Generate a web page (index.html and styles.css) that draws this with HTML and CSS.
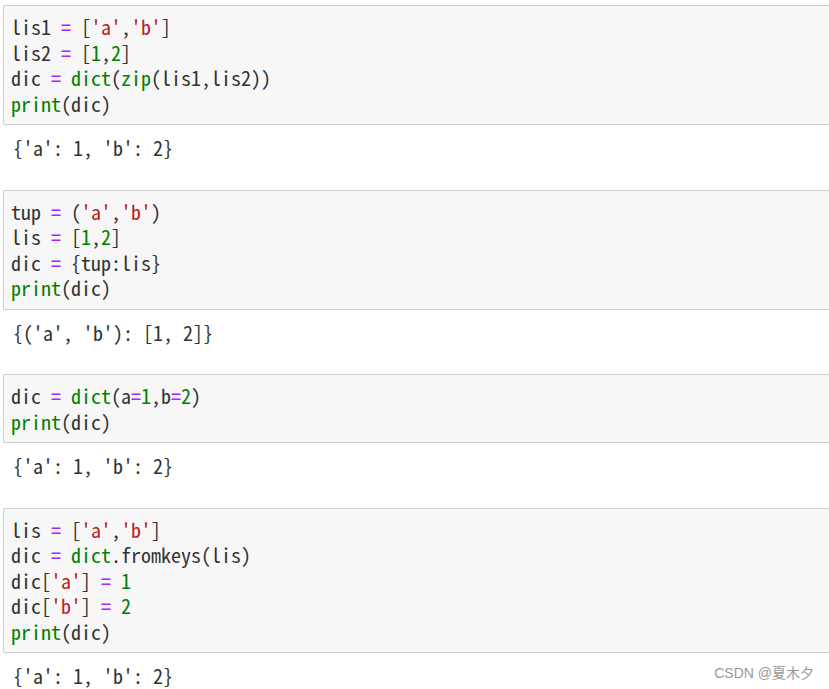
FILE: index.html
```html
<!DOCTYPE html>
<html>
<head>
<meta charset="utf-8">
<link rel="stylesheet" href="styles.css">
</head>
<body>
<div class="nb">
  <div class="cell">
    <pre class="input">lis1 <span class="o">=</span> [<span class="s">'a'</span>,<span class="s">'b'</span>]
lis2 <span class="o">=</span> [<span class="n">1</span>,<span class="n">2</span>]
dic <span class="o">=</span> <span class="k">dict</span>(<span class="k">zip</span>(lis1,lis2))
<span class="k">print</span>(dic)</pre>
    <pre class="output">{'a': 1, 'b': 2}</pre>
  </div>
  <div class="cell">
    <pre class="input">tup <span class="o">=</span> (<span class="s">'a'</span>,<span class="s">'b'</span>)
lis <span class="o">=</span> [<span class="n">1</span>,<span class="n">2</span>]
dic <span class="o">=</span> {tup:lis}
<span class="k">print</span>(dic)</pre>
    <pre class="output">{('a', 'b'): [1, 2]}</pre>
  </div>
  <div class="cell">
    <pre class="input">dic <span class="o">=</span> <span class="k">dict</span>(a<span class="o">=</span><span class="n">1</span>,b<span class="o">=</span><span class="n">2</span>)
<span class="k">print</span>(dic)</pre>
    <pre class="output">{'a': 1, 'b': 2}</pre>
  </div>
  <div class="cell">
    <pre class="input">lis <span class="o">=</span> [<span class="s">'a'</span>,<span class="s">'b'</span>]
dic <span class="o">=</span> <span class="k">dict</span>.fromkeys(lis)
dic[<span class="s">'a'</span>] <span class="o">=</span> <span class="n">1</span>
dic[<span class="s">'b'</span>] <span class="o">=</span> <span class="n">2</span>
<span class="k">print</span>(dic)</pre>
    <div class="last">
      <pre class="output">{'a': 1, 'b': 2}</pre>
      <span class="mark">CSDN @夏木夕</span>
    </div>
  </div>
</div>
</body>
</html>
```

FILE: styles.css
```css
html, body {
  margin: 0;
  padding: 0;
  background: #ffffff;
}
.nb {
  padding: 5px 0 0 3px;
  display: flex;
  flex-direction: column;
  gap: 29px;
}
.cell {
  display: flex;
  flex-direction: column;
}
pre {
  margin: 0;
  font-family: "Noto Sans Mono CJK SC", "Liberation Mono", monospace;
  font-size: 20px;
  line-height: 25.5px;
}
.input {
  background: #f7f7f7;
  border: 1px solid #cfcfcf;
  border-right: none;
  border-radius: 2px 0 0 2px;
  padding: 8px 0 8px 7px;
  color: #333333;
}
.output {
  padding: 10px 0 0 10px;
  color: #333333;
}
.o { color: #aa22ff; }
.s { color: #ba2121; }
.k { color: #008000; }
.n { color: #008000; }
.last {
  display: flex;
  justify-content: space-between;
  align-items: flex-end;
}
.mark {
  font-family: "Liberation Sans", "Noto Sans CJK SC", sans-serif;
  font-size: 14px;
  color: #999999;
  padding: 0 15px 7px 0;
}
```
